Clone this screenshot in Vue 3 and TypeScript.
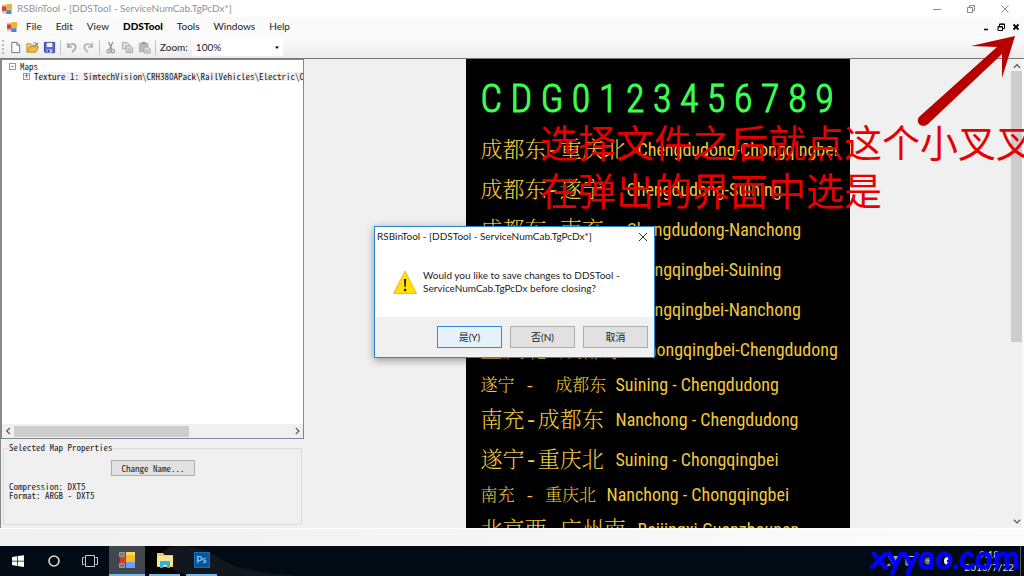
<script setup lang="ts">
import { ref } from 'vue'

interface Route {
  zh: string
  en: string
  lead: number
  small?: boolean
}

const menus: string[] = ['File', 'Edit', 'View', 'DDSTool', 'Tools', 'Windows', 'Help']
const zoom = ref('100%')

// lead: distance in pixels from the start of the row to the romanised name
const routes: Route[] = [
  { zh: '成都东-重庆北', en: 'Chengdudong-Chongqingbei', lead: 157 },
  { zh: '成都东-遂宁', en: 'Chengdudong-Suining', lead: 146 },
  { zh: '成都东-南充', en: 'Chengdudong-Nanchong', lead: 146 },
  { zh: '重庆北-遂宁', en: 'Chongqingbei-Suining', lead: 146 },
  { zh: '重庆北-南充', en: 'Chongqingbei-Nanchong', lead: 146 },
  { zh: '重庆北-成都东', en: 'Chongqingbei-Chengdudong', lead: 157 },
  { zh: '遂宁 -  成都东', en: 'Suining - Chengdudong', lead: 135, small: true },
  { zh: '南充-成都东', en: 'Nanchong - Chengdudong', lead: 135 },
  { zh: '遂宁-重庆北', en: 'Suining - Chongqingbei', lead: 135 },
  { zh: '南充 - 重庆北', en: 'Nanchong - Chongqingbei', lead: 126, small: true },
  { zh: '北京西-广州南', en: 'Beijingxi-Guanzhounan', lead: 157 },
]
</script>

<template>
  <div class="desktop">
    <header class="titlebar">
      <svg class="app-icon" viewBox="0 0 16 16" aria-hidden="true">
        <rect x="0" y="1" width="15" height="14" fill="#c8c8c8" />
        <rect x="0" y="4" width="7" height="7" fill="#d8402c" />
        <rect x="7" y="0" width="9" height="9" fill="#eeb52a" />
        <rect x="7" y="10" width="8" height="6" fill="#4f7fe0" />
      </svg>
      <span class="title">RSBinTool - [DDSTool - ServiceNumCab.TgPcDx*]</span>
      <button class="win" aria-label="Minimize"><svg viewBox="0 0 10 10"><path d="M1 5.500h8" /></svg></button>
      <button class="win" aria-label="Restore"><svg viewBox="0 0 10 10"><path d="M1.500 3.500h5v5h-5zM3.500 3.500v-2h5v5h-2" /></svg></button>
      <button class="win" aria-label="Close"><svg viewBox="0 0 10 10"><path d="M1.500 1.500l7 7M8.500 1.500l-7 7" /></svg></button>
    </header>

    <nav class="menubar">
      <svg class="app-icon" viewBox="0 0 16 16" aria-hidden="true">
        <rect x="0" y="1" width="15" height="14" fill="#c8c8c8" />
        <rect x="0" y="4" width="7" height="7" fill="#d8402c" />
        <rect x="7" y="0" width="9" height="9" fill="#eeb52a" />
        <rect x="7" y="10" width="8" height="6" fill="#4f7fe0" />
      </svg>
      <button v-for="m in menus" :key="m" class="menu" :class="{ strong: m === 'DDSTool' }">{{ m }}</button>
      <div class="mdi">
        <button aria-label="Minimize document"><svg viewBox="0 0 8 8"><path d="M2 6.500h4" stroke-width="1.500" /></svg></button>
        <button aria-label="Restore document"><svg viewBox="0 0 8 8"><path d="M1 3.500h4.500v4H1zM2.500 3.500V1h5v4.500h-2M1 4h4.500M2.500 1.300h5" /></svg></button>
        <button aria-label="Close document"><svg viewBox="0 0 8 8"><path d="M1.500 1.500l5 5M6.500 1.500l-5 5" stroke-width="1.800" /></svg></button>
      </div>
    </nav>

    <div class="toolbar">
      <span class="grip"></span>
      <button class="tool" aria-label="New">
        <svg viewBox="0 0 14 14"><path d="M3 1.500h5.500L11.500 4.500v8H3z" fill="#fff" stroke="#5e7395" /><path d="M8.500 1.500v3h3" fill="#dbe6f5" stroke="#5e7395" /></svg>
      </button>
      <button class="tool" aria-label="Open">
        <svg viewBox="0 0 14 14"><path d="M1 12V3h4l1 1.500h5V6" fill="#f6d67a" stroke="#b78a28" /><path d="M1 12l3-6h9.500l-3 6z" fill="#f4bb3c" stroke="#b78a28" /><path d="M8 2.500c2-1.500 3.500-.5 4 1.500M12.700 2l-.6 2.300-2-.8" fill="none" stroke="#4a76b8" /></svg>
      </button>
      <button class="tool" aria-label="Save">
        <svg viewBox="0 0 14 14"><path d="M1.500 1.500h11v11h-10l-1-1z" fill="#5a66d8" stroke="#353e9c" /><path d="M4 2h6v4.500H4z" fill="#eef2fd" /><path d="M4 9h6v3.500H4z" fill="#c3cbe0" /><path d="M5 9.500h2v2.500H5z" fill="#353e9c" /></svg>
      </button>
      <span class="sep"></span>
      <button class="tool" aria-label="Undo" disabled>
        <svg viewBox="0 0 14 14"><path d="M3 2v4.500h4.500M3.500 6c2-4 8-3.500 8 .5 0 2.500-2 4-4 5.500" fill="none" stroke="#aaa" stroke-width="1.800" /></svg>
      </button>
      <button class="tool" aria-label="Redo" disabled>
        <svg viewBox="0 0 14 14"><path d="M11 2v4.500H6.500M10.500 6c-2-4-8-3.500-8 .5 0 2.500 2 4 4 5.500" fill="none" stroke="#b4b4b4" stroke-width="1.800" /></svg>
      </button>
      <span class="sep"></span>
      <button class="tool" aria-label="Cut" disabled>
        <svg viewBox="0 0 14 14"><path d="M5 1l3.500 8M9.500 1L6 9" fill="none" stroke="#999" stroke-width="1.500" /><circle cx="5" cy="11" r="1.800" fill="none" stroke="#999" stroke-width="1.300" /><circle cx="9.500" cy="11" r="1.800" fill="none" stroke="#999" stroke-width="1.300" /></svg>
      </button>
      <button class="tool" aria-label="Copy" disabled>
        <svg viewBox="0 0 14 14"><path d="M1.500 1.500h5l2 2v5h-7z" fill="#ddd" stroke="#aaa" /><path d="M5.500 5.500h5l2 2v5h-7z" fill="#e2e2e2" stroke="#a2a2a2" /><path d="M7 8.500h4M7 10.500h4" stroke="#aaa" /></svg>
      </button>
      <button class="tool" aria-label="Paste" disabled>
        <svg viewBox="0 0 14 14"><path d="M1.500 2.500h9v9h-9z" fill="#bbb" stroke="#aaa" /><path d="M4 1h4v2.500H4z" fill="#999" /><path d="M6.500 6.500h4l2.500 2v4.500H6.500z" fill="#e4e4e4" stroke="#a2a2a2" /><path d="M8 9.500h3.500M8 11.500h3.500" stroke="#aaa" /></svg>
      </button>
      <span class="sep"></span>
      <label for="zoom">Zoom:</label>
      <span class="combo">
        <select id="zoom" v-model="zoom"><option>50%</option><option>100%</option><option>200%</option></select>
        <svg viewBox="0 0 6 4" aria-hidden="true"><path d="M1 .5h4L3 3z" /></svg>
      </span>
    </div>

    <main class="work">
      <aside class="side">
        <section class="tree">
          <ul>
            <li><span class="box">-</span><span>Maps</span></li>
            <li class="child"><span class="box">+</span><span class="picked">Texture 1: SimtechVision\CRH380APack\RailVehicles\Electric\CRH380A</span></li>
          </ul>
          <div class="hscroll">
            <svg viewBox="0 0 8 8"><path d="M5.500 1.500L3 4l2.500 2.500" /></svg>
            <div class="track"><div class="thumb"></div></div>
            <svg viewBox="0 0 8 8"><path d="M3 1.500L5.500 4 3 6.500" /></svg>
          </div>
        </section>
        <fieldset class="props">
          <legend>Selected Map Properties</legend>
          <button class="rename">Change Name...</button>
          <p>Compression: DXT5</p>
          <p>Format: ARGB - DXT5</p>
        </fieldset>
      </aside>

      <section class="viewer">
        <div class="sheet">
          <div class="glyphs">C D G 0 1 2 3 4 5 6 7 8 9</div>
          <div v-for="r in routes" :key="r.zh" class="route" :class="{ small: r.small }">
            <span class="zh" :style="{ width: r.lead + 'px' }">{{ r.zh }}</span>
            <span class="en">{{ r.en }}</span>
          </div>
        </div>
      </section>
      <div class="vscroll">
        <svg viewBox="0 0 8 8"><path d="M1.500 5.500L4 3l2.500 2.500" /></svg>
        <div class="vtrack"><div class="vthumb"></div></div>
        <svg viewBox="0 0 8 8"><path d="M1.500 3L4 5.500 6.500 3" /></svg>
      </div>
    </main>

    <div class="status"></div>

    <footer class="taskbar">
      <svg class="wall" viewBox="0 0 420 30" preserveAspectRatio="none" aria-hidden="true">
        <path d="M0 0h50l70 30H0z" fill="#030405" />
        <path d="M28 2c20-6 40 2 58 14 20 10 50 12 74 14H50C30 24 10 12 28 2z" fill="#11171d" />
      </svg>
      <button class="task" aria-label="Start">
        <svg viewBox="0 0 14 14"><path d="M1 3l5-.8v4.500H1zM6.700 2.100L13 1.200v5.500H6.700zM1 7.400h5v4.500l-5-.8zM6.700 7.400H13v5.500l-6.300-.9z" fill="#fff" /></svg>
      </button>
      <button class="task" aria-label="Cortana">
        <svg viewBox="0 0 14 14"><circle cx="7" cy="7" r="5" fill="none" stroke="#ddd" stroke-width="1.600" /></svg>
      </button>
      <button class="task" aria-label="Task view">
        <svg class="wide" viewBox="0 0 16 14"><path d="M3.500 1.500h9v11h-9zM2.500 3.500h-2v7h2M13.500 3.500h2v7h-2" fill="none" stroke="#ccc" /></svg>
      </button>
      <button class="task open active" aria-label="RSBinTool">
        <svg class="big" viewBox="0 0 18 18"><rect x="1" y="1" width="16" height="16" fill="#4a4c4f" /><path d="M1.500 1.500h5v4h-5zM1.500 12.500h5v4h-5z" fill="#77797c" stroke="#999" /><rect x="2" y="6" width="6" height="6" fill="#e03a26" /><rect x="8" y="1" width="9" height="10" fill="#f5bc25" /><path d="M8 1h9v3H8z" fill="#ffd75a" /><rect x="8" y="11" width="9" height="6" fill="#6f9cff" /></svg>
      </button>
      <button class="task open" aria-label="File Explorer">
        <svg class="big" viewBox="0 0 18 18"><path d="M1 2h6l1.500 2H17v12H1z" fill="#f4c85a" /><path d="M1 5h16v10H1z" fill="#ffe394" /><path d="M4 17v-7h10v7h-3v-3H7v3z" fill="#25b5ea" /></svg>
      </button>
      <button class="task open" aria-label="Photoshop"><span class="ps">Ps</span></button>
      <div class="tray">
        <svg viewBox="0 0 74 14" aria-hidden="true">
          <path d="M4 2h10L9 11z" fill="#aaa" /><path d="M2 12h5l-2-3z" fill="#888" />
          <path d="M20 2.500h11v6h-6M22 5v6h2V6" fill="none" stroke="#ccc" />
          <circle cx="44" cy="7" r="3.500" fill="#777" /><path d="M42 6h4v2z" fill="#bbb" />
          <circle cx="64" cy="7" r="4" fill="#fff" /><circle cx="64" cy="7" r="1.300" fill="#223" />
        </svg>
        <div class="clock"><span>9:18</span><span>2016/7/22</span></div>
      </div>
      <span class="mark">xyyao.com</span>
    </footer>

    <svg class="arrow" viewBox="0 0 110 100" aria-hidden="true">
      <path d="M101 6L57 16l26 1L5 87c-4 6 3 12 9 7l74-70 0 24z" fill="#b90000" />
    </svg>
    <p class="note">选择文件之后就点这个小叉叉<br />在弹出的界面中选是</p>

    <div class="dialog" role="dialog" aria-labelledby="dlg-title">
      <div class="dlg-head">
        <span id="dlg-title">RSBinTool - [DDSTool - ServiceNumCab.TgPcDx*]</span>
        <button aria-label="Close dialog"><svg viewBox="0 0 10 10"><path d="M1 1l8 8M9 1L1 9" /></svg></button>
      </div>
      <div class="dlg-body">
        <svg viewBox="0 0 24 24" aria-hidden="true">
          <path d="M12 1L23.500 23.500H.5z" fill="#ffe000" stroke="#f3b52b" />
          <path d="M11 9h2.200l-.5 8h-1.200z" fill="#111" /><circle cx="12.100" cy="20" r="1.200" fill="#111" />
        </svg>
        <p>Would you like to save changes to DDSTool - ServiceNumCab.TgPcDx before closing?</p>
      </div>
      <div class="dlg-foot">
        <button class="primary">是(Y)</button>
        <button>否(N)</button>
        <button>取消</button>
      </div>
    </div>
  </div>
</template>

<style>
body {
  margin: 0;
  overflow: hidden;
}
</style>

<style scoped>
.desktop {
  position: relative;
  display: flex;
  flex-direction: column;
  height: 100vh;
  overflow: hidden;
  background: #f0f0f0;
  color: #222;
  font: 10px/13px "Lato", "Open Sans", "Noto Sans CJK SC", sans-serif;
}
* {
  box-sizing: border-box;
}
button {
  margin: 0;
  padding: 0;
  border: 0;
  background: none;
  color: inherit;
  font: inherit;
}
svg {
  display: block;
}
p {
  margin: 0;
}
.titlebar {
  display: flex;
  align-items: center;
  height: 17px;
  padding-right: 2px;
  background: #fff;
  color: #929292;
}
.app-icon {
  width: 10px;
  height: 10px;
  margin: 0 5px 0 2px;
}
.title {
  flex: 1;
}
.win {
  width: 34px;
  height: 16px;
}
.win svg {
  width: 10px;
  height: 10px;
  margin: 0 auto;
  fill: none;
  stroke: #888;
}
.menubar {
  display: flex;
  align-items: center;
  height: 19px;
  background: #fafafa;
}
.menubar .app-icon {
  margin: 0 2px 0 7px;
}
.menu {
  padding: 0 7px;
}
.menu.strong {
  color: #000;
  font-weight: 900;
}
.mdi {
  display: flex;
  gap: 7px;
  margin: 0 4px 0 auto;
}
.mdi svg {
  width: 8px;
  height: 8px;
  fill: none;
  stroke: #000;
}
.toolbar {
  display: flex;
  align-items: center;
  height: 22px;
  padding-left: 2px;
  background: linear-gradient(#fcfcfc, #ececec);
}
.grip {
  height: 14px;
  margin-right: 3px;
  border-left: 2px dotted #bbb;
}
.tool {
  width: 17px;
  height: 16px;
}
.tool svg {
  width: 13px;
  height: 13px;
  margin: 0 auto;
}
.sep {
  height: 15px;
  margin: 0 2px;
  border-left: 1px solid #c4c4c4;
}
.toolbar label {
  margin: 0 4px 0 2px;
}
.combo {
  position: relative;
  width: 91px;
  height: 17px;
  background: #fff;
}
.combo select {
  width: 100%;
  height: 100%;
  padding: 0 4px;
  border: 0;
  background: transparent;
  color: #222;
  font: inherit;
  appearance: none;
}
.combo svg {
  position: absolute;
  top: 7px;
  right: 3px;
  width: 6px;
  height: 4px;
}
.work {
  display: flex;
  flex: 1;
  min-height: 0;
  border-top: 1px solid #777;
  border-left: 1px solid #888;
}
.side {
  display: flex;
  flex-direction: column;
  flex: none;
  width: 303px;
  font: 9px/9px "Noto Sans Mono CJK SC", "Liberation Mono", monospace;
}
.tree {
  display: flex;
  flex: 1;
  flex-direction: column;
  justify-content: space-between;
  overflow: hidden;
  border: 1px solid #828790;
  background: #fff;
}
.tree ul {
  margin: 0;
  padding: 1px 0 0 7px;
  list-style: none;
}
.tree li {
  display: flex;
  align-items: center;
  gap: 4px;
  height: 10px;
  white-space: nowrap;
}
.tree .child {
  padding-left: 14px;
}
.box {
  flex: none;
  width: 7px;
  height: 7px;
  border: 1px solid #999;
  color: #334a99;
  line-height: 4px;
  text-align: center;
}
.picked {
  background: #f0f0f0;
}
.hscroll {
  display: flex;
  align-items: center;
  height: 14px;
  background: #f0f0f0;
}
.hscroll svg,
.vscroll svg {
  flex: none;
  width: 12px;
  height: 10px;
  fill: none;
  stroke: #555;
}
.track {
  flex: 1;
}
.thumb {
  width: 63%;
  height: 11px;
  background: #cdcdcd;
}
.props {
  height: 83px;
  margin: 3px 2px 3px;
  padding: 0 5px;
  border: 1px solid #dcdcdc;
}
.props legend {
  padding: 0;
  line-height: 12px;
}
.rename {
  display: block;
  width: 84px;
  height: 16px;
  margin: 6px auto 6px 102px;
  border: 1px solid #adadad;
  background: #e1e1e1;
}
.viewer {
  display: flex;
  flex: 1;
  justify-content: center;
  overflow: hidden;
}
.sheet {
  flex: none;
  width: 384px;
  overflow: hidden;
  padding: 9px 0 0 15px;
  background: #000;
  color: #f0c83c;
}
.glyphs {
  height: 62px;
  color: #3cff50;
  font: 300 38px/62px "Roboto Condensed", "Liberation Sans Narrow", sans-serif;
  white-space: nowrap;
  -webkit-text-stroke: 1px #3cff50;
}
.route {
  display: flex;
  align-items: center;
  height: 40px;
  white-space: pre;
}
.zh {
  flex: none;
  padding-top: 4px;
  font: 300 22px/30px "Liberation Mono", "Noto Serif CJK SC", "Noto Sans CJK SC", serif;
}
.en {
  font: 18px/30px "Roboto Condensed", "Liberation Sans Narrow", sans-serif;
}
.small {
  height: 30px;
}
.small .zh {
  font-size: 17px;
}
.vscroll {
  display: flex;
  flex: none;
  flex-direction: column;
  align-items: center;
  width: 13px;
  padding: 2px 0;
  border-right: 2px solid #fafafa;
}
.vtrack {
  flex: 1;
  width: 11px;
}
.vthumb {
  height: 61%;
  background: #cdcdcd;
}
.status {
  height: 18px;
  border-top: 1px solid #fff;
  background: linear-gradient(90deg, #f0f0f0, #fcfcfc);
}
.taskbar {
  position: relative;
  display: flex;
  height: 30px;
  background: #020b14;
  color: #ddd;
}
.wall {
  position: absolute;
  left: 140px;
  width: 420px;
  height: 30px;
}
.task {
  position: relative;
  display: flex;
  align-items: center;
  justify-content: center;
  width: 36px;
}
.task svg {
  width: 14px;
  height: 14px;
}
.task svg.wide {
  width: 16px;
}
.task svg.big {
  width: 18px;
  height: 18px;
}
.open {
  width: 31px;
  margin: 0 3px;
  border-bottom: 2px solid #76b9ed;
}
.active {
  width: 36px;
  margin: 0 1px;
  background: #41464c;
}
.ps {
  width: 16px;
  height: 16px;
  background: #0b5297;
  border: 1px solid #126dbd;
  color: #6fd0ff;
  font-weight: 700;
}
.tray {
  display: flex;
  align-items: center;
  gap: 6px;
  margin: 0 3px 0 auto;
  padding-right: 6px;
  border-right: 1px solid #555;
}
.tray svg {
  width: 74px;
  height: 14px;
}
.clock {
  display: flex;
  flex-direction: column;
  align-items: center;
}
.mark {
  position: absolute;
  right: 4px;
  bottom: 1px;
  color: #0000ff;
  font: 700 34px/34px "Comic Neue", "Lato", sans-serif;
  -webkit-text-stroke: 1px #0000ff;
}
.arrow {
  position: absolute;
  top: 30px;
  right: 0;
  width: 110px;
  height: 100px;
}
.note {
  position: absolute;
  top: 117px;
  left: 540px;
  color: #e60000;
  font: 38px/48px "Noto Sans CJK SC", sans-serif;
  white-space: nowrap;
}
.dialog {
  position: absolute;
  top: 226px;
  left: 374px;
  width: 281px;
  border: 1px solid #2a86cf;
  background: #fff;
  box-shadow: 0 2px 8px rgba(0, 0, 0, 0.4);
}
.dlg-head {
  display: flex;
  align-items: center;
  justify-content: space-between;
  height: 19px;
  padding: 0 6px 0 2px;
}
.dlg-head svg {
  width: 10px;
  height: 10px;
  fill: none;
  stroke: #333;
}
.dlg-body {
  display: flex;
  align-items: center;
  gap: 6px;
  height: 71px;
  padding: 0 18px;
}
.dlg-body svg {
  flex: none;
  width: 24px;
  height: 26px;
}
.dlg-foot {
  display: flex;
  align-items: center;
  justify-content: flex-end;
  gap: 8px;
  height: 40px;
  padding: 0 6px;
  background: #f0f0f0;
}
.dlg-foot button {
  width: 65px;
  height: 22px;
  border: 1px solid #adadad;
  background: #e1e1e1;
}
.dlg-foot .primary {
  border-color: #2f8bd8;
  background: #e5f1fb;
}
</style>
